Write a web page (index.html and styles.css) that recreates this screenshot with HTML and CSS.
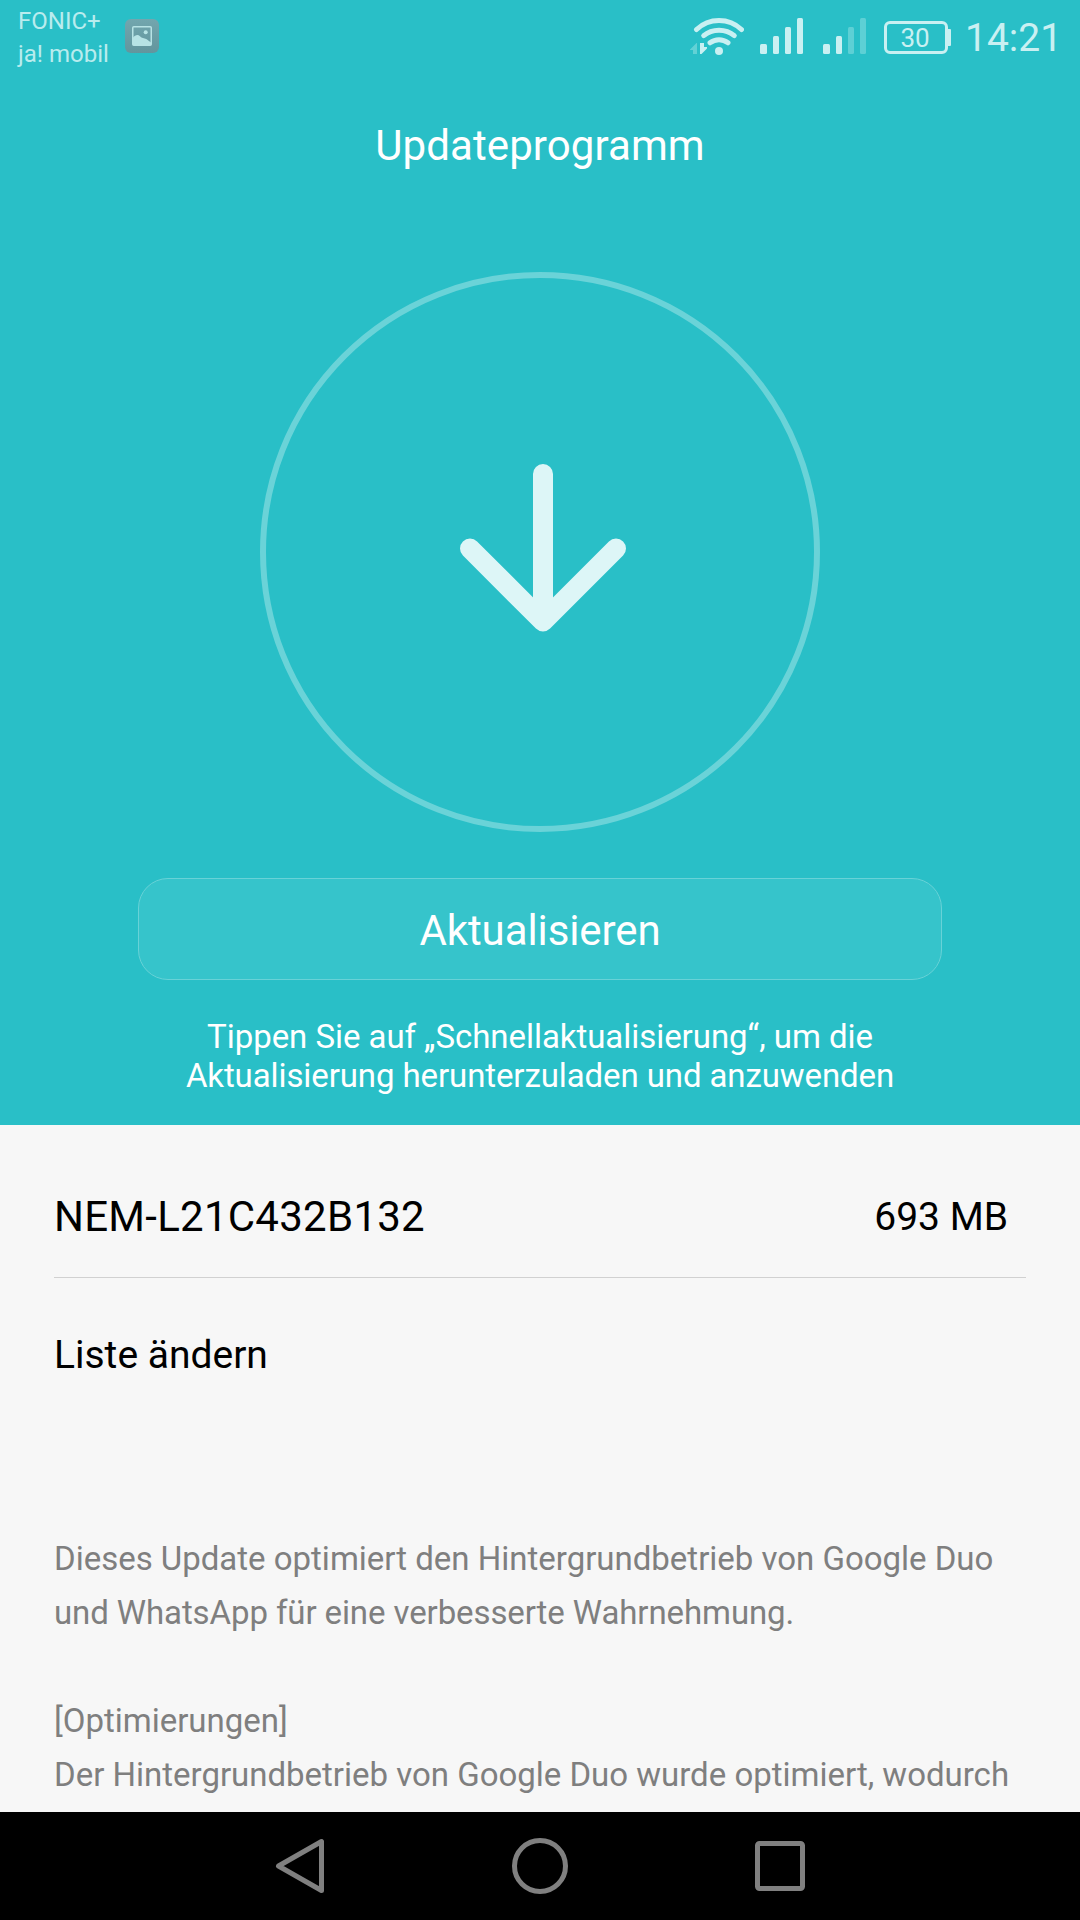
FILE: index.html
```html
<!DOCTYPE html>
<html lang="de">
<head>
<meta charset="utf-8">
<title>Updateprogramm</title>
<link rel="stylesheet" href="styles.css">
</head>
<body>
<div class="screen">
  <header class="hero">
    <div class="status-bar">
      <div class="carriers">
        <span>FONIC+</span>
        <span>ja! mobil</span>
      </div>
      <svg class="picture-icon" width="34" height="34" viewBox="0 0 34 34">
        <defs>
          <linearGradient id="tile" x1="0" y1="0" x2="0" y2="1">
            <stop offset="0" stop-color="#72a6ae"/>
            <stop offset="1" stop-color="#62959d"/>
          </linearGradient>
        </defs>
        <rect width="34" height="34" rx="6" fill="url(#tile)"/>
        <rect x="7.75" y="7.75" width="18.5" height="18.5" rx="1" fill="none" stroke="#b7e3e5" stroke-width="1.5"/>
        <path d="M8 18.5C10 16 13 15.200 15 17.200C18 20 20 18.800 22 20.500L26 23.500V26H8Z" fill="#b7e3e5"/>
        <circle cx="20.700" cy="13.200" r="2" fill="#b7e3e5"/>
      </svg>
      <div class="indicators">
        <svg class="wifi" width="56" height="40" viewBox="0 0 56 40">
          <g fill="none" stroke="#c9f0f2" stroke-width="5" stroke-linecap="round">
            <path d="M8.500 14.500Q18 5.500 31 5.500T53.500 14.500"/>
            <path d="M15.700 20.700Q22 15.200 31 15.200T46.300 20.700"/>
            <path d="M22 27.800Q26 24.800 31 24.800T40 27.800"/>
          </g>
          <circle cx="31" cy="36" r="4" fill="#c9f0f2"/>
          <path d="M2 34.500L8.500 28H9V39H5V35H2Z" fill="#62d1d5"/>
          <path d="M12 28H16V32H19V33.500L13.500 39H12Z" fill="#c9f0f2"/>
        </svg>
        <svg class="signal" width="43" height="36" viewBox="0 0 43 36" fill="#c9f0f2">
          <rect x="0" y="26" width="7" height="10" rx="1.500"/>
          <rect x="13" y="18" width="6" height="18" rx="1.500"/>
          <rect x="25" y="9" width="6" height="27" rx="1.500"/>
          <rect x="37" y="0" width="6" height="36" rx="1.500"/>
        </svg>
        <svg class="signal" width="43" height="36" viewBox="0 0 43 36" fill="#c9f0f2">
          <rect x="0" y="26" width="7" height="10" rx="1.500"/>
          <rect x="13" y="18" width="6" height="18" rx="1.500"/>
          <rect x="25" y="9" width="6" height="27" rx="1.500" fill="#5dd0d5"/>
          <rect x="37" y="0" width="6" height="36" rx="1.500" fill="#5dd0d5"/>
        </svg>
        <div class="battery"><span class="battery-cell">30</span><i class="battery-tip"></i></div>
        <span class="clock">14:21</span>
      </div>
    </div>
    <h1 class="title">Updateprogramm</h1>
    <div class="ring">
      <svg class="arrow" width="166" height="168" viewBox="0 0 166 168" fill="none" stroke="#ddf6f7" stroke-width="20" stroke-linecap="round" stroke-linejoin="round">
        <path d="M83 10V157.500M10 84.500L83 157.500L156 84.500"/>
      </svg>
    </div>
    <button class="update-button">Aktualisieren</button>
    <p class="hint"><span class="hint-lead">Tippen Sie auf „Schnellaktualisierung“, um die</span><br>Aktualisierung herunterzuladen und anzuwenden</p>
  </header>
  <main class="details">
    <div class="version">
      <span class="version-name">NEM-L21C432B132</span>
      <span class="version-size">693 MB</span>
    </div>
    <h2 class="changes-title">Liste ändern</h2>
    <p class="changes">Dieses Update optimiert den Hintergrundbetrieb von Google Duo<br><span class="tight">und WhatsApp für eine verbesserte Wahrnehmung.</span><br><br>[Optimierungen]<br>Der Hintergrundbetrieb von Google Duo wurde optimiert, wodurch</p>
  </main>
  <nav class="nav-bar">
    <svg class="nav-icons" width="530" height="56" viewBox="0 0 530 56" fill="none" stroke="#808080" stroke-width="5" stroke-linejoin="round">
      <path d="M3.500 28L46.500 3.500V52.500Z"/>
      <circle cx="265" cy="28" r="25.500"/>
      <rect x="482.500" y="5.500" width="45" height="45" rx="2"/>
    </svg>
  </nav>
</div>
</body>
</html>
```
FILE: styles.css
```css
* {
  box-sizing: border-box;
}

body {
  margin: 0;
  font-family: Roboto, sans-serif;
}

.screen {
  display: flex;
  flex-direction: column;
  width: 1080px;
  height: 1920px;
  overflow: hidden;
  background: #f7f7f7;
}

.hero {
  display: flex;
  flex-direction: column;
  align-items: center;
  flex: none;
  height: 1125px;
  background: #29bfc7;
  color: #fff;
}

.status-bar {
  display: flex;
  align-items: flex-start;
  width: 100%;
  height: 74px;
  padding: 0 22px 0 18px;
  color: #c9f0f2;
}

.carriers {
  display: flex;
  flex-direction: column;
  width: 107px;
  padding-top: 5px;
  font-size: 24px;
  line-height: 33px;
  white-space: nowrap;
  color: #b9ecee;
}

.picture-icon {
  margin-top: 19px;
}

.indicators {
  display: flex;
  align-items: flex-start;
  margin-left: auto;
}

.wifi {
  margin: 15px 16px 0 0;
}

.signal {
  margin: 18px 20px 0 0;
}

.signal + .signal {
  margin-right: 18px;
}

.battery {
  display: flex;
  align-items: center;
  margin: 21px 14px 0 0;
}

.battery-cell {
  width: 64px;
  height: 33px;
  padding-right: 2px;
  border: 3px solid #c9f0f2;
  border-radius: 6px;
  font-size: 26px;
  line-height: 28px;
  text-align: center;
}

.battery-tip {
  width: 3px;
  height: 17px;
  border-radius: 0 1px 1px 0;
  background: #c9f0f2;
}

.clock {
  width: 93px;
  font-size: 39px;
  line-height: 46px;
  padding-top: 15px;
  white-space: nowrap;
}

.title {
  margin: 47px 0 0;
  font-size: 42px;
  font-weight: 400;
  line-height: 49px;
  letter-spacing: 0.1px;
}

.ring {
  display: flex;
  justify-content: center;
  width: 560px;
  height: 560px;
  margin-top: 102px;
  padding: 186px 0 0 6px;
  border: 6px solid #6ad3d8;
  border-radius: 50%;
}

.update-button {
  width: 804px;
  height: 102px;
  margin-top: 46px;
  padding: 2px 0 0;
  border: 1px solid #68d2d7;
  border-radius: 30px;
  background: #36c4cb;
  font: 400 42px/49px Roboto, sans-serif;
  letter-spacing: -0.1px;
  color: #fff;
}

.hint {
  margin: 37px 0 0;
  font-size: 33px;
  line-height: 39px;
  letter-spacing: -0.1px;
  text-align: center;
}

.hint-lead {
  letter-spacing: -0.05px;
}

.details {
  flex: 1;
  padding: 0 54px;
  overflow: hidden;
}

.version {
  display: flex;
  justify-content: space-between;
  align-items: center;
  height: 153px;
  padding: 30px 18px 0 0;
  border-bottom: 1px solid #d1d1d1;
  color: #000;
}

.version-name {
  font-size: 42px;
  line-height: 49px;
  letter-spacing: 0.26px;
}

.version-size {
  padding-top: 2px;
  font-size: 39px;
  line-height: 46px;
}

.changes-title {
  margin: 54px 0 0;
  font-size: 39px;
  font-weight: 400;
  line-height: 46px;
  color: #000;
}

.changes {
  margin: 154px 0 0;
  font-size: 33px;
  line-height: 54px;
  letter-spacing: -0.01px;
  white-space: nowrap;
  color: #7f7f7f;
}

.tight {
  letter-spacing: -0.1px;
}

.nav-bar {
  display: flex;
  flex: none;
  height: 108px;
  padding: 26px 0 0 275px;
  background: #000;
}
```
